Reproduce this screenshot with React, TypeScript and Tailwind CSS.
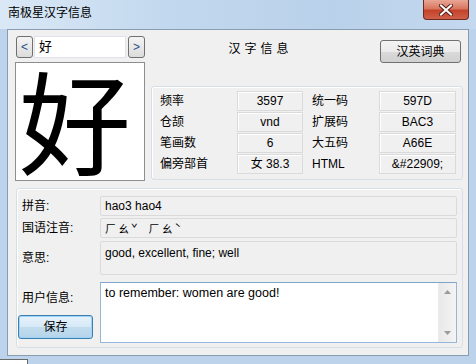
const rowsTop = [
  { a: '频率', b: '3597', c: '统一码', d: '597D' },
  { a: '仓颉', b: 'vnd', c: '扩展码', d: 'BAC3' },
  { a: '笔画数', b: '6', c: '大五码', d: 'A66E' },
  { a: '偏旁部首', b: '女 38.3', c: 'HTML', d: '&#22909;' },
];

function TitleBar() {
  return (
    <div className="h-[29px] shrink-0 flex items-start bg-[linear-gradient(90deg,#dae8f6_0%,#c2d8ee_35%,#b9d1ea_70%,#c4d9ef_100%)]">
      <span className="pl-[8px] pt-[5px] text-[12px] leading-[16px] text-black">南极星汉字信息</span>
      <div className="ml-auto mr-[7px] w-[46px] h-[20px] rounded-b-[4px] border border-t-0 border-[#6d2a1e] bg-[linear-gradient(180deg,#e9a796_0%,#d9765f_45%,#c4432a_55%,#d0604a_100%)] flex items-center justify-center">
        <svg width="14" height="12" viewBox="0 0 14 12">
          <path d="M2 1.5 L12 10.5 M12 1.5 L2 10.5" stroke="#5a2018" strokeWidth="4" strokeLinecap="square" />
          <path d="M2 1.5 L12 10.5 M12 1.5 L2 10.5" stroke="#ffffff" strokeWidth="2" strokeLinecap="square" />
        </svg>
      </div>
    </div>
  );
}

function ValueBox({ text, className = '' }: { text: string; className?: string }) {
  return (
    <div className={`h-[20px] border border-[#dadada] bg-[#f0f0f0] shadow-[inset_1px_1px_0_#fff] flex items-center justify-center leading-none ${className}`}>
      {text}
    </div>
  );
}

export default function App() {
  return (
    <div className="w-[476px] h-[364px] flex flex-col bg-[#bcd3eb] text-[12px] text-black font-['Liberation_Sans','Noto_Sans_CJK_SC',sans-serif] overflow-hidden">
      <TitleBar />
      <div className="h-[327px] shrink-0 px-[7px] flex">
        <div className="flex-1 border border-[#8a9cb0] bg-[#f0f0f0] pl-[7px] pr-[5px] pt-[6px] flex flex-col">
          {/* upper section */}
          <div className="flex">
            <div className="w-[130px] flex flex-col">
              <div className="h-[22px] flex">
                <button className="ml-px w-[17px] h-[22px] p-0 rounded-[3px] border border-[#707070] bg-[linear-gradient(180deg,#f4f4f4,#dcdcdc)] text-[#27508a] text-[12px] leading-none flex items-center justify-center">&lt;</button>
                <div className="ml-px w-[93px] h-[22px] bg-white border border-[#e2e3ea] flex items-center pl-[4px] text-[13px]">好</div>
                <button className="ml-[2px] w-[17px] h-[22px] p-0 rounded-[3px] border border-[#707070] bg-[linear-gradient(180deg,#f4f4f4,#dcdcdc)] text-[#27508a] text-[12px] leading-none flex items-center justify-center">&gt;</button>
              </div>
              <div className="mt-[4px] h-[119px] bg-white border border-[#8e8e8e] flex items-center justify-center pr-[10px]">
                <span className="text-[112px] leading-none font-['Noto_Sans_CJK_SC',sans-serif] -mt-[8px]">好</span>
              </div>
            </div>
            <div className="ml-[6px] flex-1 flex flex-col">
              <div className="h-[50px] flex items-start pt-[4px]">
                <div className="flex-1 text-center pt-[1px] pr-[10px] tracking-[4px] text-[12px] leading-[16px]">汉字信息</div>
                <button className="mr-[2px] w-[81px] h-[23px] rounded-[3px] border border-[#707070] bg-[linear-gradient(180deg,#f3f3f3_0%,#ebebeb_50%,#dadada_51%,#d0d0d0_100%)] text-[12px] leading-none">汉英词典</button>
              </div>
              <div className="h-[94px] rounded-[3px] border border-[#d5dfe5] shadow-[inset_1px_1px_0_#fff] pl-[8px] pt-[4px]">
                <div className="grid grid-cols-[77px_66px_76px_77px] gap-y-px">
                  {rowsTop.map((r) => (
                    <div key={r.a} className="contents">
                      <div className="h-[20px] flex items-center">{r.a}</div>
                      <ValueBox text={r.b} />
                      <div className="h-[20px] flex items-center pl-[9px]">{r.c}</div>
                      <ValueBox text={r.d} />
                    </div>
                  ))}
                </div>
              </div>
            </div>
          </div>

          {/* lower section */}
          <div className="mt-[7px] h-[160px] rounded-[3px] border border-[#d5dfe5] shadow-[inset_1px_1px_0_#fff] ml-px pl-[5px] pr-[5px] pt-[7px] flex flex-col">
            <div className="flex items-center">
              <div className="w-[78px]">拼音:</div>
              <div className="flex-1 h-[20px] border border-[#dadada] rounded-[2px] bg-[#f0f0f0] pl-[4px] flex items-center">hao3 hao4</div>
            </div>
            <div className="mt-[2px] flex items-center">
              <div className="w-[78px]">国语注音:</div>
              <div className="flex-1 h-[20px] border border-[#dadada] rounded-[2px] bg-[#f0f0f0] pl-[4px] flex items-center text-[11px] tracking-[2px] font-['Noto_Sans_CJK_TC',sans-serif] whitespace-pre">ㄏㄠˇ  ㄏㄠˋ</div>
            </div>
            <div className="mt-[3px] flex items-center">
              <div className="w-[78px]">意思:</div>
              <div className="flex-1 h-[34px] border border-[#dadada] rounded-[2px] bg-[#f0f0f0] pl-[4px] pt-[2px]">good, excellent, fine; well</div>
            </div>
            <div className="mt-[7px] flex items-start h-[61px]">
              <div className="w-[78px] flex flex-col">
                <div className="mt-[8px] leading-[16px]">用户信息:</div>
                <button className="mt-[9px] -ml-[4px] w-[75px] h-[24px] rounded-[3px] border border-[#3c7fb1] bg-[linear-gradient(180deg,#e6f2fb_0%,#d6e9f7_50%,#c2dcee_51%,#b5d4ea_100%)] shadow-[inset_0_0_0_1px_#9fd3f5] leading-none">保存</button>
              </div>
              <div className="flex-1 h-[61px] bg-white border border-[#94b7da] border-t-[#7ea4cc] flex">
                <div className="flex-1 pl-[4px] pt-[2px] text-[12.5px] leading-[16px]">to remember: women are good!</div>
                <div className="w-[18px] bg-[linear-gradient(90deg,#e8e8e8,#f4f4f4)] border-l border-[#ececec] flex flex-col items-center justify-between py-[7px]">
                  <svg width="7" height="4" viewBox="0 0 7 4"><path d="M0 4 L3.5 0 L7 4Z" fill="#9a9a9a" /></svg>
                  <svg width="7" height="4" viewBox="0 0 7 4"><path d="M0 0 L3.5 4 L7 0Z" fill="#9a9a9a" /></svg>
                </div>
              </div>
            </div>
          </div>
        </div>
      </div>
      <div className="flex-1 flex items-end">
        <div className="w-[28px] h-[5px] bg-white border-t border-r border-[#6a6a6a]" />
      </div>
    </div>
  );
}
